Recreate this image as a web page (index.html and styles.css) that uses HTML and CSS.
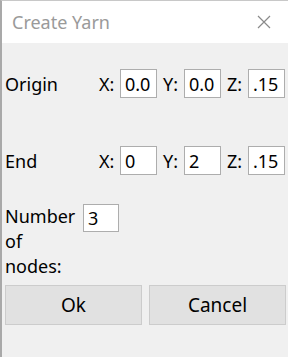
FILE: index.html
```html
<!DOCTYPE html>
<html lang="en">
<head>
  <meta charset="UTF-8">
  <title>Create Yarn</title>
  <link rel="stylesheet" href="styles.css">
</head>
<body>
  <div class="window">
    <div class="titlebar">
      <span class="title">Create Yarn</span>
      <svg class="close" width="14" height="14" viewBox="0 0 14 14">
        <path d="M1 1 L13 13 M13 1 L1 13" stroke="#8a8a8a" stroke-width="1.2" fill="none"/>
      </svg>
    </div>

    <div class="content">
      <!-- Point de départ -->
      <div class="row origin">
        <span class="row-label">Origin</span>
        <span class="axis">X:</span><input class="field" type="text" value="0.0">
        <span class="axis">Y:</span><input class="field" type="text" value="0.0">
        <span class="axis">Z:</span><input class="field" type="text" value=".15">
      </div>

      <!-- Point d'arrivée -->
      <div class="row end">
        <span class="row-label">End</span>
        <span class="axis">X:</span><input class="field" type="text" value="0">
        <span class="axis">Y:</span><input class="field" type="text" value="2">
        <span class="axis">Z:</span><input class="field" type="text" value=".15">
      </div>

      <div class="nodes">
        <span class="nodes-label">Number of nodes:</span>
        <input class="field" type="text" value="3">
      </div>

      <div class="buttons">
        <button class="button">Ok</button>
        <button class="button">Cancel</button>
      </div>
    </div>
  </div>
</body>
</html>
```

FILE: styles.css
```css
* {
  margin: 0;
  padding: 0;
  box-sizing: border-box;
  font-family: "Noto Sans", "Open Sans", sans-serif;
}

html, body {
  height: 100%;
}

body {
  background-color: #f0f0f0;
}

.window {
  height: 100%;
  border-left: 2px solid #a9a9a9;
  border-top: 1px solid #c8c8c8;
  background-color: #f0f0f0;
}

.titlebar {
  height: 42px;
  background-color: #fff;
  display: flex;
  align-items: center;
  justify-content: space-between;
  padding: 0 17px 0 10px;
}

.title {
  font-size: 18px;
  color: #9a9a9a;
}

.content {
  padding: 0 2px 0 3px;
}

.row {
  display: flex;
  align-items: center;
  height: 29px;
  font-size: 18px;
  color: #000;
}

.origin {
  margin-top: 26px;
}

.end {
  margin-top: 48px;
}

.row-label {
  width: 94px;
}

.axis {
  width: 21px;
  margin-left: 6px;
}

.row-label + .axis {
  margin-left: 0;
}

.field {
  width: 37px;
  height: 29px;
  border: 1px solid #adadad;
  background-color: #fff;
  font-size: 18px;
  padding-left: 4px;
  color: #000;
}

.nodes {
  display: flex;
  align-items: flex-start;
  margin-top: 29px;
  font-size: 18px;
}

.nodes-label {
  width: 78px;
  line-height: 25px;
}

.nodes .field {
  width: 36px;
  height: 28px;
}

.buttons {
  display: flex;
  gap: 7px;
  margin-top: 6px;
}

.button {
  flex: 1;
  height: 40px;
  background-color: #e1e1e1;
  border: 1px solid #cccccc;
  font-size: 19px;
  color: #000;
}
```
